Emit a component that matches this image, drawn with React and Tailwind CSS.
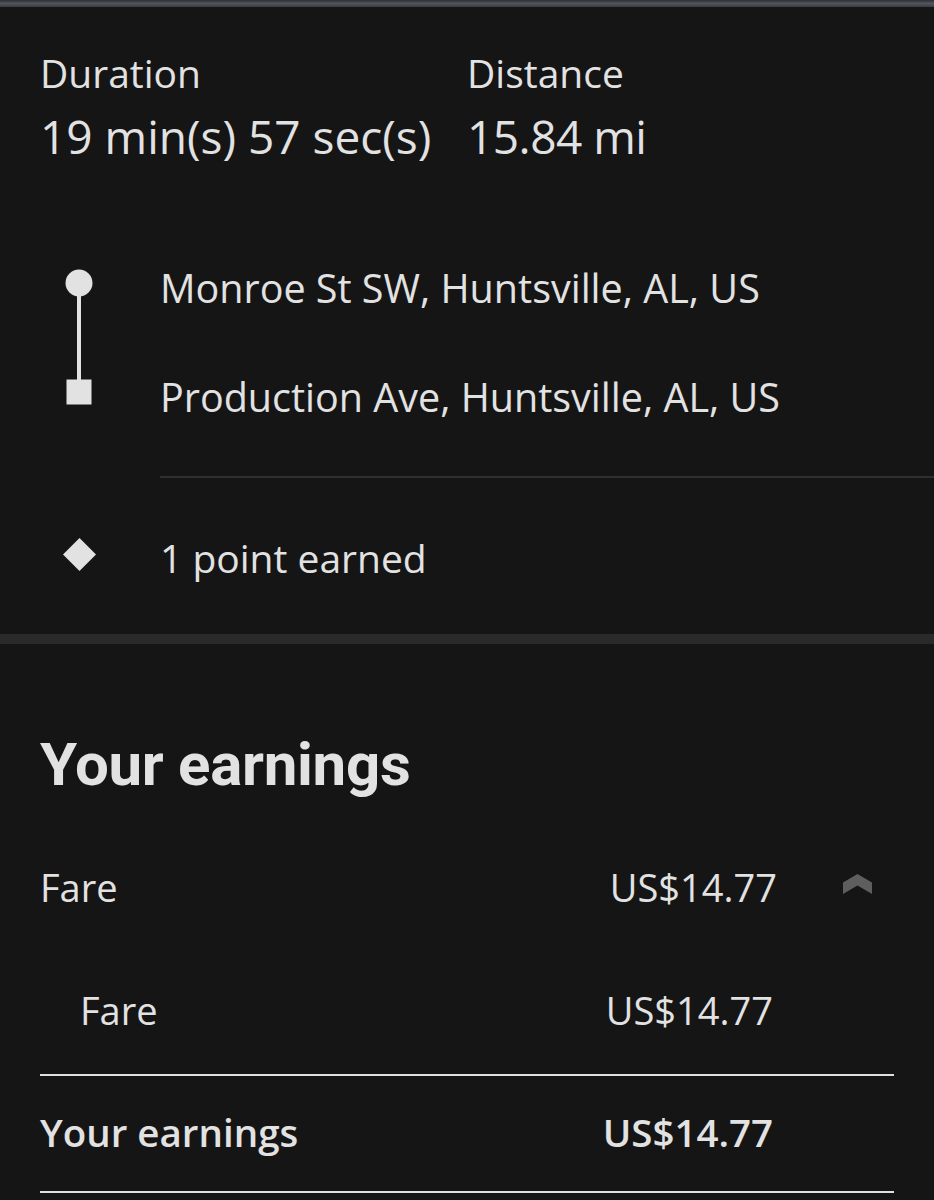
import React from 'react';

const body = { fontFamily: '"Open Sans", "Noto Sans", sans-serif' };

function RouteIcon() {
  return (
    <svg width="28" height="136" viewBox="0 0 28 136" className="block">
      <circle cx="14" cy="14" r="13.5" fill="#e2e2e2" />
      <rect x="12" y="14" width="4" height="100" fill="#e2e2e2" />
      <rect x="1.5" y="110.5" width="25" height="25" fill="#e2e2e2" />
    </svg>
  );
}

function Diamond() {
  return (
    <svg width="33" height="33" viewBox="0 0 33 33" className="block">
      <polygon points="16.5,0 33,16.5 16.5,33 0,16.5" fill="#e2e2e2" />
    </svg>
  );
}

function ChevronUp() {
  return (
    <svg width="29" height="20" viewBox="0 0 29 20" className="block">
      <polygon points="0,8.5 14.5,0 29,8.5 29,20 14.5,11.5 0,20" fill="#5e5e5e" />
    </svg>
  );
}

export default function App() {
  return (
    <div className="min-h-[1200px] w-[934px] bg-[#151515] text-[#e2e2e2] overflow-hidden" style={body}>
      {/* map edge peeking at the top */}
      <div className="h-[7px] bg-gradient-to-b from-[#2e3035] via-[#52555d] to-[#3a3c42]" />

      {/* Trip summary */}
      <div className="grid grid-cols-2 px-10 pt-[44px]">
        <div>
          <div className="text-[39px] leading-[44px]">Duration</div>
          <div className="mt-[14px] text-[46px] leading-[54px] font-medium whitespace-nowrap">19 min(s) 57 sec(s)</div>
        </div>
        <div>
          <div className="text-[39px] leading-[44px]">Distance</div>
          <div className="mt-[14px] text-[46px] leading-[54px] font-medium tracking-[-0.5px]">15.84 mi</div>
        </div>
      </div>

      {/* Route */}
      <div className="mt-[102px] flex pl-10">
        <div className="w-[78px] flex justify-center pt-[4px]">
          <RouteIcon />
        </div>
        <div className="ml-[42px] flex-1">
          <div className="text-[39.5px] leading-[46px] whitespace-nowrap">Monroe St SW, Huntsville, AL, US</div>
          <div className="mt-[63px] text-[39.5px] leading-[46px] whitespace-nowrap">Production Ave, Huntsville, AL, US</div>
          <div className="mt-[56px] h-[2px] bg-[#2f2f2f]" />
        </div>
      </div>

      <div className="mt-[57px] flex pl-10">
        <div className="w-[78px] flex justify-center pt-[3px]">
          <Diamond />
        </div>
        <div className="ml-[42px] text-[39px] leading-[46px]">1 point earned</div>
      </div>

      <div className="mt-[53px] h-[10px] bg-[#2a2a2a]" />

      {/* Earnings */}
      <div className="pt-[86px]">
        <h2
          className="px-10 text-[60px] leading-[70px] font-bold tracking-[-0.3px]"
          style={{ fontFamily: 'Roboto, "Liberation Sans", sans-serif' }}
        >
          Your earnings
        </h2>

        <div className="mt-[64px] flex items-start pl-10 pr-[62px]">
          <div className="flex-1 text-[38px] leading-[46px]">Fare</div>
          <div className="text-[38px] leading-[46px]">US$14.77</div>
          <div className="ml-[66px] mt-[10px]">
            <ChevronUp />
          </div>
        </div>

        <div className="mt-[77px] flex pl-20 pr-[161px]">
          <div className="flex-1 text-[38px] leading-[46px]">Fare</div>
          <div className="text-[38px] leading-[46px]">US$14.77</div>
        </div>

        <div className="mx-10 mt-[41px] h-[2px] bg-[#e0e0e0]" />

        <div className="mt-[33px] flex pl-10 pr-[161px]">
          <div className="flex-1 text-[38.5px] leading-[46px] font-semibold">Your earnings</div>
          <div className="text-[38.5px] leading-[46px] font-semibold">US$14.77</div>
        </div>

        <div className="mx-10 mt-[36px] h-[2px] bg-[#e0e0e0]" />
      </div>
    </div>
  );
}
